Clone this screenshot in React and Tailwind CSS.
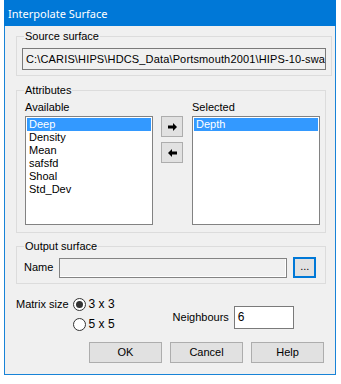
const AVAILABLE = ['Deep', 'Density', 'Mean', 'safsfd', 'Shoal', 'Std_Dev']
const SELECTED = ['Depth']

function ListBox({ items, selected }) {
  return (
    <div className="flex h-[109px] w-[128px] flex-col border border-[#828282] bg-white p-[1px]">
      {items.map((it) => (
        <div
          key={it}
          className={`h-[13px] pl-[2px] leading-[13px] ${
            it === selected ? 'bg-[#3399ff] text-white' : 'text-black'
          }`}
        >
          {it}
        </div>
      ))}
    </div>
  )
}

function ArrowBtn({ dir }) {
  return (
    <div className="flex h-[21px] w-[22px] items-center justify-center border border-[#adadad] bg-[#e1e1e1]">
      <svg width="9" height="8" viewBox="0 0 9 8" className={dir === 'left' ? 'rotate-180' : ''}>
        <path d="M0 2.5h5V0l4 4-4 4V5.5H0z" fill="#000" />
      </svg>
    </div>
  )
}

function Radio({ checked, label }) {
  return (
    <div className="flex h-[20px] items-center gap-[3px]">
      <div className="flex h-[13px] w-[13px] items-center justify-center rounded-full border border-[#333] bg-white">
        {checked && <div className="h-[7px] w-[7px] rounded-full bg-[#333]" />}
      </div>
      <span className="text-[12px]">{label}</span>
    </div>
  )
}

function Button({ children }) {
  return (
    <div className="flex h-[21px] w-[73px] items-center justify-center border border-[#adadad] bg-[#e1e1e1]">
      {children}
    </div>
  )
}

export default function App() {
  return (
    <div className="h-[384px] w-[341px] bg-white">
      <div
        className="ml-[4px] flex h-[375px] w-[332px] flex-col border-x border-b border-[#1883d7] bg-[#f0f0f0] text-[11px] leading-[13px] text-black"
        style={{ fontFamily: '"Liberation Sans", Arial, sans-serif' }}
      >
        {/* Title bar */}
        <div
          className="-mx-[1px] flex h-[26px] items-center bg-[#0078d7] pl-[4px] text-[11px] text-white"
          style={{ fontFamily: '"Noto Sans", "Open Sans", sans-serif' }}
        >
          Interpolate Surface
        </div>

        {/* Source surface */}
        <fieldset className="ml-[11px] mt-[4px] w-[310px] border border-[#dcdcdc] px-[5px] pb-[5px] pt-[5px]">
          <legend className="ml-[2px] px-[1px] leading-[13px]">Source surface</legend>
          <div className="flex h-[22px] items-center overflow-hidden whitespace-nowrap border border-[#7a7a7a] bg-[#f0f0f0] pl-[3px] tracking-[0.15px]">
            C:\CARIS\HIPS\HDCS_Data\Portsmouth2001\HIPS-10-swa
          </div>
        </fieldset>

        {/* Attributes */}
        <fieldset className="ml-[11px] mt-[8px] w-[310px] border border-[#dcdcdc] pb-[7px] pl-[8px] pr-[5px] pt-[4px]">
          <legend className="-ml-[1px] px-[1px] leading-[13px]">Attributes</legend>
          <div className="flex">
            <div className="flex flex-col gap-[2px]">
              <span>Available</span>
              <ListBox items={AVAILABLE} selected="Deep" />
            </div>
            <div className="ml-[8px] mt-[15px] flex flex-col gap-[5px]">
              <ArrowBtn dir="right" />
              <ArrowBtn dir="left" />
            </div>
            <div className="ml-[9px] flex flex-col gap-[2px]">
              <span>Selected</span>
              <ListBox items={SELECTED} selected="Depth" />
            </div>
          </div>
        </fieldset>

        {/* Output surface */}
        <fieldset className="ml-[11px] mt-[7px] w-[310px] border border-[#dcdcdc] pb-[5px] pl-[7px] pr-[9px] pt-[4px]">
          <legend className="ml-[0px] px-[1px] leading-[13px]">Output surface</legend>
          <div className="flex items-center">
            <span>Name</span>
            <div className="ml-[6px] h-[20px] w-[228px] border border-[#838383] bg-[#f0f0f0] shadow-[inset_-1px_-1px_0_#fff]" />
            <div className="ml-[6px] flex h-[21px] w-[23px] items-center justify-center border-2 border-[#0078d7] bg-[#e1e1e1] pb-[2px]">
              ...
            </div>
          </div>
        </fieldset>

        {/* Matrix size / Neighbours */}
        <div className="ml-[11px] mt-[10px] flex">
          <span className="mt-[4px]">Matrix size</span>
          <div className="ml-[4px] flex flex-col">
            <Radio checked label="3 x 3" />
            <Radio label="5 x 5" />
          </div>
          <div className="ml-[58px] mt-[6px] flex items-center">
            <span>Neighbours</span>
            <div className="ml-[5px] flex h-[23px] w-[60px] items-center border border-[#7a7a7a] bg-white pl-[3px] text-[12px]">
              6
            </div>
          </div>
        </div>

        {/* Buttons */}
        <div className="ml-[84px] mt-[8px] flex gap-[8px]">
          <Button>OK</Button>
          <Button>Cancel</Button>
          <Button>Help</Button>
        </div>
      </div>
    </div>
  )
}
